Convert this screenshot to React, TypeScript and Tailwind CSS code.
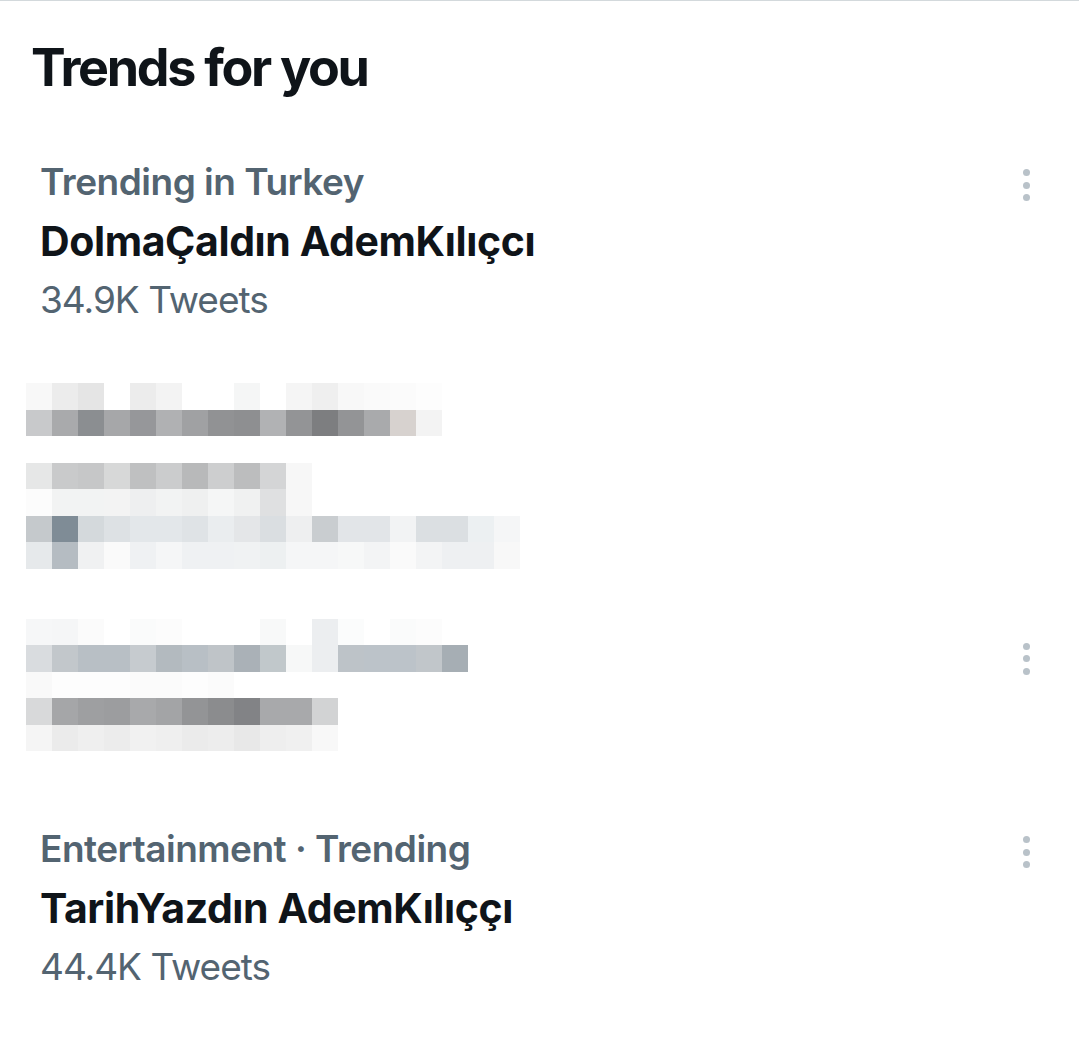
import React from 'react';

type Trend = { category: string; name: string; count: string };

const top: Trend = { category: 'Trending in Turkey', name: 'DolmaÇaldın AdemKılıçcı', count: '34.9K Tweets' };
const bottom: Trend = { category: 'Entertainment · Trending', name: 'TarihYazdın AdemKılıççı', count: '44.4K Tweets' };

// pixelated (censored) trend, one array per mosaic row
const blurA: string[][] = [
  ['#f8f8f8', '#ececec', '#e5e5e5', '#ffffff', '#ececec', '#f3f3f3', '#ffffff', '#ffffff', '#f5f6f6', '#ffffff', '#f5f5f5', '#efefef', '#f8f8f8', '#fafafa', '#fbfbfb', '#fdfdfd'],
  ['#c8c9cb', '#a9aaac', '#8b8e91', '#a6a7a9', '#96979a', '#b0b1b3', '#a0a1a3', '#919294', '#8e8f91', '#b1b2b4', '#939496', '#7d7e80', '#939496', '#a9aaac', '#d7d2cf', '#f3f3f3'],
  [],
  ['#e6e7e7', '#c9cacb', '#c6c7c8', '#d7d8d8', '#bfc0c1', '#cbcccd', '#b8b9ba', '#cdcecf', '#bcbdbe', '#d4d5d6', '#f7f7f7'],
  ['#fcfcfc', '#f2f3f3', '#f2f3f3', '#f3f3f3', '#eeeff0', '#f2f3f3', '#eff0f0', '#f5f6f6', '#f0f1f1', '#dfe0e1', '#f7f7f7'],
  ['#c5c9cc', '#7f8c96', '#d4d9dc', '#dde1e4', '#e3e7ea', '#e3e7ea', '#dfe3e6', '#eaedef', '#e4e6e8', '#dadee1', '#eeeff0', '#c9cdd0', '#e2e5e8', '#e2e5e8', '#f2f3f4', '#dbdfe2', '#dbdfe2', '#ecf0f2', '#f5f6f7'],
  ['#e6e9eb', '#b5bcc2', '#f0f1f2', '#fafafa', '#eff1f3', '#f5f6f7', '#eff1f3', '#eff1f3', '#f0f2f3', '#edf0f1', '#f5f6f7', '#f5f6f7', '#f7f8f8', '#f3f4f5', '#fafafa', '#f3f4f5', '#eef0f2', '#eef0f2', '#f8f8f8'],
];

const blurB: string[][] = [
  ['#f6f7f8', '#f5f6f7', '#fbfbfb', '#ffffff', '#fafbfb', '#fcfcfc', '#ffffff', '#ffffff', '#ffffff', '#f8f9f9', '#ffffff', '#eceef0', '#fbfcfc', '#ffffff', '#fafbfb', '#fcfcfc'],
  ['#d9dcdf', '#c2c7cb', '#b8bfc5', '#b8bfc5', '#c6cbcf', '#b3babf', '#b8bfc5', '#bfc4c8', '#aab1b7', '#c1c8cb', '#f7f8f8', '#eceef0', '#bdc3c8', '#bcc3c9', '#bcc3c9', '#c1c6ca', '#a6aeb4'],
  ['#f9f9f9', '#fdfdfd', '#fdfdfd', '#fdfdfd', '#fbfbfb', '#fbfbfb', '#fdfdfd', '#fbfbfb', '#ffffff', '#ffffff'],
  ['#d8d9da', '#a5a6a8', '#9e9fa1', '#9c9d9f', '#a8a9ab', '#a3a4a6', '#939496', '#8b8c8e', '#828386', '#a8a9ab', '#a8a9ab', '#d2d3d4'],
  ['#f5f5f5', '#ebebeb', '#efefef', '#ececec', '#f1f1f1', '#efefef', '#ebebeb', '#ededed', '#e8e8e8', '#eeeeee', '#f0f0f0', '#f8f8f8'],
];

const font = { fontFamily: 'Inter, "Noto Sans", sans-serif' };

function Dots() {
  return (
    <div className="flex flex-col gap-[5.5px]">
      <span className="block w-[7px] h-[7px] rounded-full bg-[#b9c2c9]" />
      <span className="block w-[7px] h-[7px] rounded-full bg-[#b9c2c9]" />
      <span className="block w-[7px] h-[7px] rounded-full bg-[#b9c2c9]" />
    </div>
  );
}

function TrendRow({ t }: { t: Trend }) {
  return (
    <div className="flex justify-between pl-[40px] pr-[49px]">
      <div className="flex flex-col">
        <span className="text-[37px] leading-[54px] font-semibold tracking-[-0.5px] text-[#536471]">{t.category}</span>
        <span className="text-[41px] leading-[64px] font-bold tracking-[-0.4px] text-[#0f1419]">{t.name}</span>
        <span className="text-[37px] leading-[54px] font-normal tracking-[-1px] text-[#536471]">{t.count}</span>
      </div>
      <div className="pt-[14px]">
        <Dots />
      </div>
    </div>
  );
}

function Mosaic({ rows }: { rows: string[][] }) {
  return (
    <div className="flex flex-col">
      {rows.map((row, i) => (
        <div key={i} className="flex h-[26.5px]">
          {row.map((c, j) => (
            <div key={j} className="w-[26px] h-full" style={{ backgroundColor: c }} />
          ))}
        </div>
      ))}
    </div>
  );
}

export default function App() {
  return (
    <div className="w-[1079px] h-[1051px] bg-white border-t border-[#d3d9dc] overflow-hidden" style={font}>
      <h2 className="pl-[31px] pt-[36px] text-[52px] leading-[62px] font-bold tracking-[-2.3px] text-[#0f1419]">Trends for you</h2>

      <div className="mt-[56px]">
        <TrendRow t={top} />
      </div>

      <div className="mt-[56px] pl-[26px]">
        <Mosaic rows={blurA} />
      </div>

      <div className="mt-[50px] flex justify-between pl-[26px] pr-[49px]">
        <Mosaic rows={blurB} />
        <div className="pt-[24px]">
          <Dots />
        </div>
      </div>

      <div className="mt-[71px]">
        <TrendRow t={bottom} />
      </div>
    </div>
  );
}
